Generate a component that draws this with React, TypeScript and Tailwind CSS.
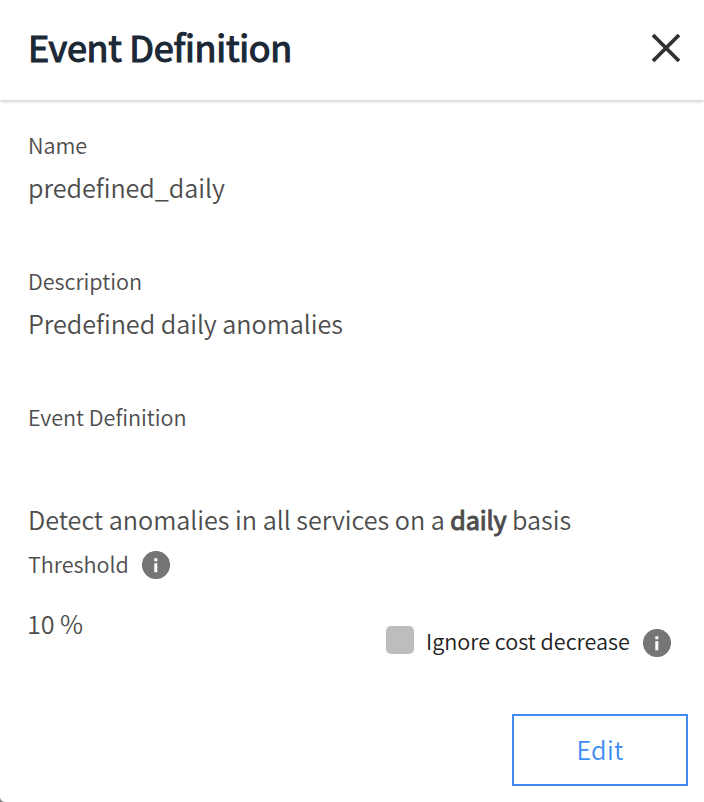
function InfoIcon() {
  return (
    <svg className="mt-0.5 size-7 shrink-0" viewBox="0 0 28 28" aria-hidden="true">
      <circle cx="14" cy="14" r="14.1" fill="#757575" />
      <path d="M12.3 7.3h3v2.9h-3zM12.3 12.2h3v9h-3z" fill="#fff" />
    </svg>
  );
}

function Field({ label, value }: { label: string; value?: string }) {
  return (
    <div className="h-[136px]">
      <div className="text-[21.6px] leading-[38px] tracking-[-0.03px]">{label}</div>
      {value && <div className="text-[25.2px] leading-[46px] tracking-[-0.04px]">{value}</div>}
    </div>
  );
}

export default function App() {
  return (
    <div className="h-[802px] w-[704px] bg-[#808080]">
      <div className="flex h-[802px] w-[704px] flex-col overflow-hidden rounded-bl-[5px] bg-white font-['Noto_Sans_CJK_SC',sans-serif] font-[350] text-[#4d4d4d]">
        <header className="flex h-[100px] shrink-0 items-center justify-between pr-[23px] pl-7 shadow-[0_1px_4px_rgba(0,0,0,0.24)]">
          <h1 className="mb-2 text-[36px] leading-[92px] font-normal tracking-[-0.27px] text-[#1b2836] [-webkit-text-stroke:1.2px_#1b2836]">
            Event Definition
          </h1>
          <svg className="mb-0.5 h-7 w-7 overflow-visible" viewBox="0 0 28 28" aria-label="Close">
            <path d="M0 0 26 26M26 0 0 26" stroke="#303030" strokeWidth="3.8" fill="none" />
          </svg>
        </header>
        <main className="flex flex-col pt-[26px] pl-7">
          <Field label="Name" value="predefined_daily" />
          <Field label="Description" value="Predefined daily anomalies" />
          <div className="h-[98px] text-[21.6px] leading-[38px] tracking-[-0.03px]">Event Definition</div>
          <p className="text-[25.2px] leading-[46px] tracking-[-0.025px] whitespace-nowrap">
            Detect anomalies in all services on a{" "}
            <b className="font-normal tracking-[-0.2px] [-webkit-text-stroke:1px_#4d4d4d]">daily</b> basis
          </p>
          <div className="mt-[3px] flex h-[38px] items-center">
            <span className="w-[114px] text-[21.6px] leading-[38px] tracking-[-0.03px]">Threshold</span>
            <InfoIcon />
          </div>
          <div className="mt-[17px] flex h-[60px] pr-[32px]">
            <span className="-ml-px w-[359px] text-[25.2px] leading-[46px] tracking-[-0.1px]">10 %</span>
            <div className="mt-[23px] flex h-[38px] items-center">
              <span className="mb-1 size-7 shrink-0 rounded-[5px] bg-[#bdbdbd]" />
              <span className="mb-0.5 ml-3 w-[217px] text-[21.6px] leading-[38px] tracking-[-0.01px] whitespace-nowrap text-[#212121]">
                Ignore cost decrease
              </span>
              <InfoIcon />
            </div>
          </div>
          <button className="mt-[54px] mr-4 h-[72px] w-[176px] self-end border-2 border-[#3f8cf4] pb-0.5 text-[25.2px] leading-[66px] tracking-[0.3px] text-[#3f8cf4]">
            Edit
          </button>
        </main>
      </div>
    </div>
  );
}
